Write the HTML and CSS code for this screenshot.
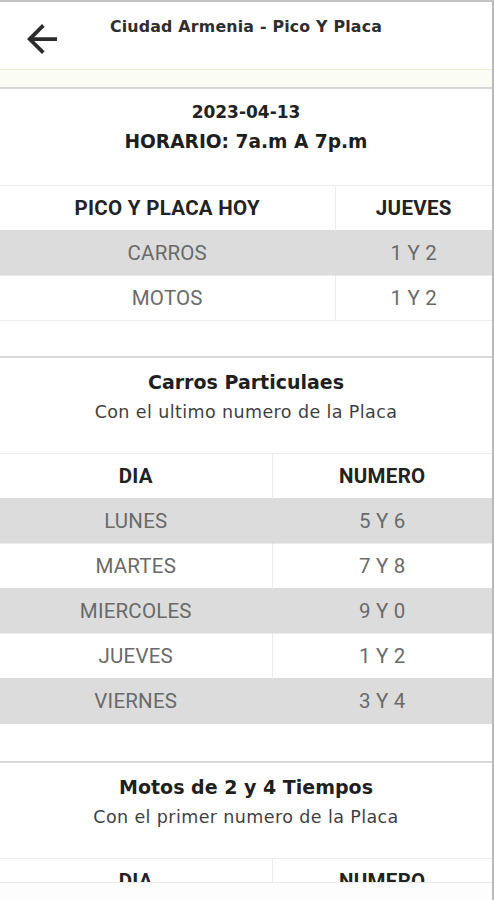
FILE: index.html
```html
<!DOCTYPE html>
<html lang="es">
<head>
<meta charset="utf-8">
<title>Ciudad Armenia - Pico Y Placa</title>
<link rel="stylesheet" href="styles.css">
</head>
<body>
<div class="frame">
  <header class="appbar">
    <button class="back" aria-label="Volver">
      <svg viewBox="4 4 16 16" width="30" height="30"><path d="M20 11H7.83l5.59-5.59L12 4l-8 8 8 8 1.41-1.41L7.83 13H20v-2z" fill="#2b2b2b"/></svg>
    </button>
    <h1 class="title">Ciudad Armenia - Pico Y Placa</h1>
    <span></span>
  </header>
  <div class="band"></div>

  <main class="content">
    <section class="card card-first">
      <p class="date">2023-04-13</p>
      <p class="hours">HORARIO: 7a.m A 7p.m</p>
      <table class="grid grid-today">
        <tr class="head"><th>PICO Y PLACA HOY</th><th>JUEVES</th></tr>
        <tr class="odd"><td>CARROS</td><td>1 Y 2</td></tr>
        <tr><td>MOTOS</td><td>1 Y 2</td></tr>
      </table>
    </section>

    <section class="card">
      <h2 class="card-title">Carros Particulaes</h2>
      <p class="card-sub">Con el ultimo numero de la Placa</p>
      <table class="grid grid-week">
        <tr class="head"><th>DIA</th><th>NUMERO</th></tr>
        <tr class="odd"><td>LUNES</td><td>5 Y 6</td></tr>
        <tr><td>MARTES</td><td>7 Y 8</td></tr>
        <tr class="odd"><td>MIERCOLES</td><td>9 Y 0</td></tr>
        <tr><td>JUEVES</td><td>1 Y 2</td></tr>
        <tr class="odd"><td>VIERNES</td><td>3 Y 4</td></tr>
      </table>
    </section>

    <section class="card">
      <h2 class="card-title">Motos de 2 y 4 Tiempos</h2>
      <p class="card-sub">Con el primer numero de la Placa</p>
      <table class="grid grid-week">
        <tr class="head"><th>DIA</th><th>NUMERO</th></tr>
        <tr class="odd"><td>LUNES</td><td>5 Y 6</td></tr>
      </table>
    </section>
  </main>
  <div class="bottom-bar"></div>
</div>
</body>
</html>
```

FILE: styles.css
```css
* { box-sizing: border-box; }
html, body { margin: 0; padding: 0; }
body {
  width: 494px;
  height: 900px;
  overflow: hidden;
  background: #ffffff;
  font-family: "DejaVu Sans", "Open Sans", sans-serif;
}
.frame {
  position: relative;
  height: 900px;
  overflow: hidden;
  border-top: 2px solid #c4c4c4;
  border-right: 2px solid #b9b9b9;
}
.appbar {
  height: 67px;
  display: grid;
  grid-template-columns: 1fr auto 1fr;
  align-items: start;
  background: #fff;
}
.back {
  border: 0;
  background: none;
  padding: 0;
  margin: 22px 0 0 27px;
  width: 30px;
  height: 30px;
  justify-self: start;
}
.back svg { display: block; }
.title {
  margin: 15px 0 0;
  font-size: 15.8px;
  font-weight: 700;
  color: #2e2e2e;
  line-height: 20px;
  letter-spacing: 0.2px;
}
.band {
  height: 20px;
  background: #fbfcf4;
  border-top: 1px solid #e9efcf;
  border-bottom: 2px solid #d6d6d6;
}
.card {
  border-bottom: 2px solid #d8d8d8;
  padding: 11px 0 37px;
  text-align: center;
}
.card-first { padding-top: 12px; padding-bottom: 35px; }
.date {
  margin: 0;
  font-size: 17px;
  line-height: 22px;
  font-weight: 700;
  color: #222;
}
.hours {
  margin: 5px 0 0;
  font-size: 18.6px;
  line-height: 28px;
  font-weight: 700;
  color: #1e1e1e;
}
.card-title {
  margin: 0;
  font-size: 19px;
  line-height: 26px;
  font-weight: 700;
  color: #1f1f1f;
}
.card-sub {
  margin: 5px 0 0;
  font-size: 17.5px;
  line-height: 24px;
  font-weight: 400;
  color: #3f3f3f;
  letter-spacing: 0.4px;
}
.grid {
  width: 100%;
  border-collapse: collapse;
  margin-top: 29px;
  font-family: Roboto, "Liberation Sans", sans-serif;
}
.grid th, .grid td {
  height: 45px;
  padding: 0;
  text-align: center;
  border-top: 1px solid #ececec;
}
.grid tr:last-child td { border-bottom: 1px solid #ececec; }
.grid th {
  font-size: 20.5px;
  font-weight: 700;
  color: #222;
  letter-spacing: 0.3px;
}
.grid td {
  font-size: 20.5px;
  font-weight: 400;
  color: #6a6a6a;
  letter-spacing: 0.2px;
}
.grid th:first-child, .grid td:first-child { border-right: 1px solid #ececec; }
.grid tr.odd td { background: #dcdcdc; border-color: #dcdcdc; }
.grid-today th:first-child { width: 335px; }
.grid-week th:first-child { width: 272px; }
.bottom-bar {
  position: absolute;
  left: 0;
  right: 0;
  bottom: 0;
  height: 18px;
  background: #fdfdfd;
  border-top: 1px solid #eaeaea;
}
```
